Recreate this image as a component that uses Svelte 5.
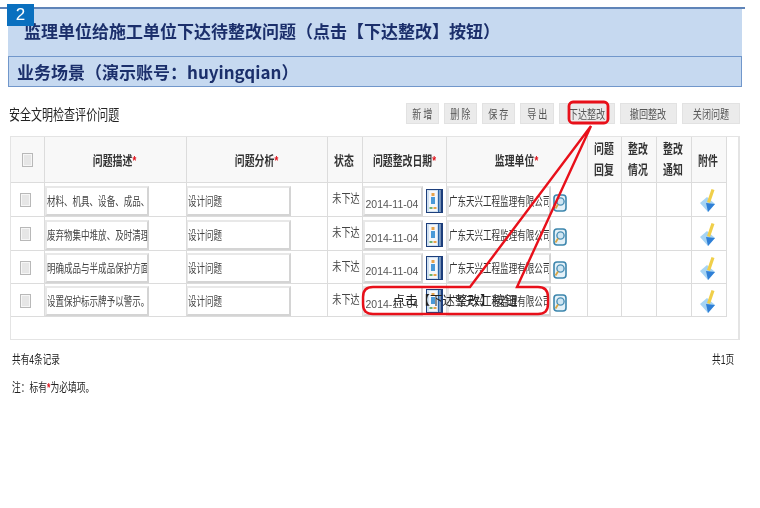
<script lang="ts">
  const buttons = [
    { label: '新 增', width: 33 },
    { label: '删 除', width: 33 },
    { label: '保 存', width: 33 },
    { label: '导 出', width: 34 },
    { label: '下达整改', width: 56 },
    { label: '撤回整改', width: 57 },
    { label: '关闭问题', width: 58 }
  ];

  const rows = [
    { desc: '材料、机具、设备、成品、保护', height: 34 },
    { desc: '废弃物集中堆放、及时清理', height: 34 },
    { desc: '明确成品与半成品保护方面', height: 33 },
    { desc: '设置保护标示牌予以警示。', height: 33 }
  ];
</script>

{#snippet bookIcon()}
  <svg class="book" width="17" height="24" viewBox="0 0 17 24">
    <rect x="0.5" y="0.5" width="16" height="23" fill="#cfe0f0" stroke="#1d3f7c" />
    <rect x="3" y="2" width="8" height="20" fill="#f4f7fb" />
    <rect x="12" y="1" width="1.5" height="22" fill="#2a64a8" />
    <rect x="14.5" y="1" width="1.5" height="22" fill="#1d3f7c" />
    <rect x="5.5" y="4" width="3" height="3" fill="#e7a34a" />
    <rect x="5" y="8" width="4" height="7" fill="#4a9ad8" />
    <rect x="3.5" y="18" width="3" height="2" fill="#6db36d" />
    <rect x="7.5" y="18" width="3" height="2" fill="#e7a34a" />
  </svg>
{/snippet}

{#snippet lensIcon()}
  <svg class="lens" width="14" height="18" viewBox="0 0 14 18">
    <rect x="1" y="1" width="12" height="16" rx="3" fill="#e4f1f8" stroke="#3d86ad" stroke-width="1.6" />
    <circle cx="7.5" cy="7.5" r="3.6" fill="#cfe6f3" stroke="#4b8fb5" stroke-width="1.4" />
    <path d="M5 10.5 L2.5 14.5" stroke="#d9a441" stroke-width="1.8" />
  </svg>
{/snippet}

{#snippet clipIcon()}
  <svg class="clip" width="18" height="24" viewBox="0 0 18 24">
    <path d="M1 14 L8 8 L16 15 L9 23 Z" fill="#a6d4f4" />
    <path d="M7 14 L16 15 L9 23 Z" fill="#2f7fd6" />
    <path d="M12.5 0 L15.5 1 L11 14 L8 13 Z" fill="#f0cf4a" />
  </svg>
{/snippet}

<div class="page">
  <div class="rule"></div>
  <div class="badge">2</div>

  <div class="banner">
    <h1>监理单位给施工单位下达待整改问题（点击【下达整改】按钮）</h1>
    <h2>业务场景（演示账号：huyingqian）</h2>
  </div>

  <div class="toolbar">
    <span class="section-title"><span class="squeeze">安全文明检查评价问题</span></span>
    <div class="buttons">
      {#each buttons as b}
        <button style="width: {b.width}px"><span class="squeeze">{b.label}</span></button>
      {/each}
    </div>
  </div>

  <div class="table-box">
    <table>
      <colgroup>
        <col style="width: 33px" /><col style="width: 142px" /><col style="width: 141px" />
        <col style="width: 35px" /><col style="width: 84px" /><col style="width: 141px" />
        <col style="width: 34px" /><col style="width: 35px" /><col style="width: 35px" />
        <col style="width: 35px" />
      </colgroup>
      <thead>
        <tr>
          <th><input class="check head-check" type="checkbox" /></th>
          <th><span class="squeeze">问题描述<i>*</i></span></th>
          <th><span class="squeeze">问题分析<i>*</i></span></th>
          <th><span class="squeeze">状态</span></th>
          <th><span class="squeeze">问题整改日期<i>*</i></span></th>
          <th><span class="squeeze">监理单位<i>*</i></span></th>
          <th class="tall"><span class="squeeze">问题<br />回复</span></th>
          <th class="tall"><span class="squeeze">整改<br />情况</span></th>
          <th class="tall"><span class="squeeze">整改<br />通知</span></th>
          <th><span class="squeeze">附件</span></th>
        </tr>
      </thead>
      <tbody>
        {#each rows as row}
          <tr style="height: {row.height}px">
            <td class="center"><input class="check" type="checkbox" /></td>
            <td><div class="field wide"><span class="squeeze">{row.desc}</span></div></td>
            <td><div class="field analysis"><span class="squeeze">设计问题</span></div></td>
            <td class="center status"><span class="squeeze">未下达</span></td>
            <td>
              <div class="inline">
                <div class="field date">2014-11-04</div>
                {@render bookIcon()}
              </div>
            </td>
            <td>
              <div class="inline">
                <div class="field wide company"><span class="squeeze">广东天兴工程监理有限公司</span></div>
                {@render lensIcon()}
              </div>
            </td>
            <td></td>
            <td></td>
            <td></td>
            <td class="center">{@render clipIcon()}</td>
          </tr>
        {/each}
      </tbody>
    </table>
  </div>

  <div class="pager">
    <span class="squeeze">共有4条记录</span>
    <span class="squeeze right">共1页</span>
  </div>
  <p class="note"><span class="squeeze">注：标有<i>*</i>为必填项。</span></p>

  <svg class="callout" width="760" height="508" viewBox="0 0 760 508">
    <rect x="569" y="102" width="39" height="21" rx="4" fill="none" stroke="#e8101a" stroke-width="2.8" />
    <path
      d="M373 287 H470 L591 126 L517 287 H538 Q548 287 548 297 V304 Q548 314 538 314 H373 Q363 314 363 304 V297 Q363 287 373 287 Z"
      fill="none"
      stroke="#e8101a"
      stroke-width="2.4"
    />
    <text x="455" y="305" text-anchor="middle">点击【下达整改】按钮</text>
  </svg>
</div>

<style>
  :global(body) {
    margin: 0;
    background: #fff;
  }

  .page {
    position: relative;
    width: 760px;
    height: 508px;
    overflow: hidden;
    padding-top: 7px;
    box-sizing: border-box;
    background: #fff;
    font-family: "Liberation Sans", "Noto Sans CJK SC", sans-serif;
    color: #333;
    filter: blur(0.35px);
  }

  .squeeze {
    display: inline-block;
    transform: scaleX(0.76);
    white-space: nowrap;
  }

  i {
    color: #e0141c;
    font-style: normal;
    font-weight: bold;
  }

  .rule {
    width: 745px;
    height: 2px;
    background: #5f84b8;
  }

  .badge {
    position: absolute;
    left: 7px;
    top: 4px;
    width: 27px;
    height: 22px;
    background: #0a70bf;
    color: #fff;
    font-size: 17px;
    line-height: 22px;
    text-align: center;
  }

  .banner {
    margin: 0 18px 0 8px;
    background: #c6d9f0;
    color: #1b2f6b;
    font-family: "Noto Sans CJK SC", sans-serif;
  }

  h1 {
    margin: 0;
    height: 47px;
    padding-left: 16px;
    font-size: 17px;
    line-height: 44px;
    font-weight: 700;
  }

  h2 {
    margin: 0;
    height: 29px;
    padding-left: 8px;
    border: 1px solid #7197cb;
    font-size: 17px;
    line-height: 29px;
    font-weight: 700;
  }

  .toolbar {
    display: flex;
    align-items: center;
    justify-content: space-between;
    margin: 16px 20px 12px 9px;
    height: 21px;
  }

  .section-title {
    width: 112px;
    font-size: 14.5px;
    color: #222;
  }

  .section-title .squeeze {
    transform-origin: left;
  }

  .buttons {
    display: flex;
    gap: 5px;
  }

  button {
    height: 21px;
    padding: 0;
    border: 1px solid #e2e2e2;
    background: #ebebeb;
    color: #555;
    font: 12px "Noto Sans CJK SC", sans-serif;
    line-height: 18px;
    white-space: nowrap;
  }

  .table-box {
    width: 727px;
    margin-left: 10px;
    padding-bottom: 22px;
    border: 1px solid #e4e4e4;
    border-right-width: 2px;
  }

  table {
    width: 715px;
    table-layout: fixed;
    border-collapse: collapse;
  }

  th,
  td {
    padding: 0;
    border: 1px solid #dcdcdc;
    border-left-width: 0;
    border-top-width: 0;
    font-size: 12px;
    vertical-align: bottom;
  }

  thead tr {
    height: 45px;
  }

  th {
    background: #f8f8f8;
    font-weight: bold;
    color: #333;
    text-align: center;
    vertical-align: middle;
    white-space: nowrap;
    overflow: hidden;
    font-size: 13px;
  }

  th.tall {
    font-size: 13px;
    line-height: 21px;
  }

  td.center {
    text-align: center;
    vertical-align: middle;
  }

  td.status {
    vertical-align: top;
    padding-top: 7px;
    line-height: 18px;
    color: #444;
  }

  .check {
    appearance: none;
    display: inline-block;
    vertical-align: middle;
    width: 11px;
    height: 14px;
    margin: 2px 3px 0 0;
    border: 1px solid #b8b8b8;
    background: #e6e6e6;
    box-shadow: inset 0 0 0 1px #f6f6f6;
  }

  .head-check {
    margin: 0;
  }

  .field {
    box-sizing: border-box;
    height: 30px;
    padding-top: 5px;
    overflow: hidden;
    border: 2px solid #d8d8d8;
    border-color: #e8e8e8 #d4d4d4 #d4d4d4 #e8e8e8;
    background: #fff;
    font-size: 12px;
    line-height: 18px;
    white-space: nowrap;
    color: #444;
  }

  .field .squeeze {
    transform-origin: left;
    transform: scaleX(0.71);
  }

  .wide {
    width: 104px;
  }

  .analysis {
    width: 105px;
    margin-left: -1px;
  }

  .date {
    width: 60px;
    padding: 8px 0 0 1px;
    font-size: 10.5px;
    line-height: 16px;
    color: #555;
  }

  .company {
    color: #333;
  }

  .inline {
    display: flex;
    align-items: flex-end;
    gap: 3px;
  }

  .book {
    margin-bottom: 3px;
  }

  .lens {
    margin: 0 0 4px -1px;
  }

  .clip {
    display: block;
    margin: 4px 6px 0 7px;
  }

  .pager {
    display: flex;
    justify-content: space-between;
    margin: 11px 26px 0 12px;
    font-size: 12px;
    line-height: 18px;
    color: #222;
  }

  .pager .squeeze {
    transform-origin: left;
    transform: scaleX(0.72);
  }

  .pager .right {
    width: 22px;
  }

  .note {
    margin: 10px 0 0 12px;
    font-size: 12px;
    line-height: 18px;
    color: #222;
  }

  .note .squeeze {
    transform-origin: left;
    transform: scaleX(0.73);
  }

  .callout {
    position: absolute;
    left: 0;
    top: 0;
    pointer-events: none;
  }

  .callout text {
    font-family: "Noto Sans CJK SC", sans-serif;
    font-size: 12.5px;
    font-weight: 400;
    fill: #222;
  }
</style>
